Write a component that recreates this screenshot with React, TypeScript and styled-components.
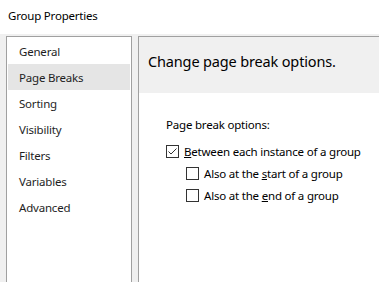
import { createGlobalStyle } from "styled-components";
import styled from "styled-components";

const GlobalStyle = createGlobalStyle`
    html, body {
        margin: 0;
        padding: 0;
    }
    body {
        width: 379px;
        height: 282px;
        overflow: hidden;
        font-family: "Noto Sans", "Open Sans", sans-serif;
        font-size: 11.5px;
        letter-spacing: -0.2px;
        color: #000;
        background: #f0f0f0;
    }
`;

const StyledWindow = styled.div`
    display: flex;
    flex-direction: column;
    width: 379px;
    height: 282px;
`;

const StyledTitleBar = styled.div`
    height: 34px;
    flex: none;
    background: #fff;
    display: flex;
    align-items: center;
    padding: 0 8px 4px;
    box-sizing: border-box;
`;

const StyledBody = styled.div`
    flex: 1;
    display: flex;
    gap: 6px;
    padding: 2px 0 0 6px;
    background: #f0f0f0;
    min-height: 0;
`;

const StyledNavList = styled.ul`
    list-style: none;
    margin: 0;
    padding: 1px 1px 0;
    width: 126px;
    box-sizing: border-box;
    background: #fff;
    border: 1px solid #a0a0a0;
    border-bottom: none;
`;

const StyledNavItem = styled.li<{ $selected?: boolean }>`
    height: 26px;
    display: flex;
    align-items: center;
    padding-left: 11px;
    background: ${(p) => (p.$selected ? "#e5e5e5" : "transparent")};
    color: #1e1e1e;
`;

const StyledPanel = styled.section`
    flex: 1;
    display: flex;
    flex-direction: column;
    border-top: 1px solid #a0a0a0;
    border-left: 1px solid #a0a0a0;
    background: #fff;
`;

const StyledPanelHeader = styled.div`
    height: 56px;
    flex: none;
    background: #f0f0f0;
    display: flex;
    align-items: center;
    padding: 0 0 8px 9px;
    box-sizing: border-box;
    font-size: 14.5px;
    letter-spacing: -0.15px;
`;

const StyledPanelContent = styled.div`
    display: flex;
    flex-direction: column;
    padding: 22px 0 0 27px;
`;

const StyledGroupLabel = styled.div`
    height: 18px;
    display: flex;
    align-items: center;
    margin-bottom: 7px;
`;

const StyledOption = styled.label<{ $indent?: boolean }>`
    display: flex;
    align-items: center;
    gap: 5px;
    height: 22px;
    padding-left: ${(p) => (p.$indent ? "20px" : "0")};
`;

const StyledBox = styled.span`
    width: 13px;
    height: 13px;
    box-sizing: border-box;
    border: 1px solid #333;
    background: #fff;
    display: flex;
    align-items: center;
    justify-content: center;
    flex: none;
`;

const StyledKey = styled.span`
    text-decoration: underline;
`;

const navItems = [
    "General",
    "Page Breaks",
    "Sorting",
    "Visibility",
    "Filters",
    "Variables",
    "Advanced",
];

function CheckBox({ checked }: { checked?: boolean }) {
    return (
        <StyledBox>
            {checked && (
                <svg width="11" height="11" viewBox="0 0 11 11">
                    <path d="M1.5 5.5 L4 8 L9.5 2.5" fill="none" stroke="#333" strokeWidth="1" />
                </svg>
            )}
        </StyledBox>
    );
}

export default function App() {
    return (
        <StyledWindow>
            <GlobalStyle />
            <StyledTitleBar>Group Properties</StyledTitleBar>
            <StyledBody>
                <StyledNavList>
                    {navItems.map((item) => (
                        <StyledNavItem key={item} $selected={item === "Page Breaks"}>
                            {item}
                        </StyledNavItem>
                    ))}
                </StyledNavList>
                <StyledPanel>
                    <StyledPanelHeader>Change page break options.</StyledPanelHeader>
                    <StyledPanelContent>
                        <StyledGroupLabel>Page break options:</StyledGroupLabel>
                        <StyledOption>
                            <CheckBox checked />
                            <span>
                                <StyledKey>B</StyledKey>etween each instance of a group
                            </span>
                        </StyledOption>
                        <StyledOption $indent>
                            <CheckBox />
                            <span>
                                Also at the <StyledKey>s</StyledKey>tart of a group
                            </span>
                        </StyledOption>
                        <StyledOption $indent>
                            <CheckBox />
                            <span>
                                Also at the <StyledKey>e</StyledKey>nd of a group
                            </span>
                        </StyledOption>
                    </StyledPanelContent>
                </StyledPanel>
            </StyledBody>
        </StyledWindow>
    );
}
